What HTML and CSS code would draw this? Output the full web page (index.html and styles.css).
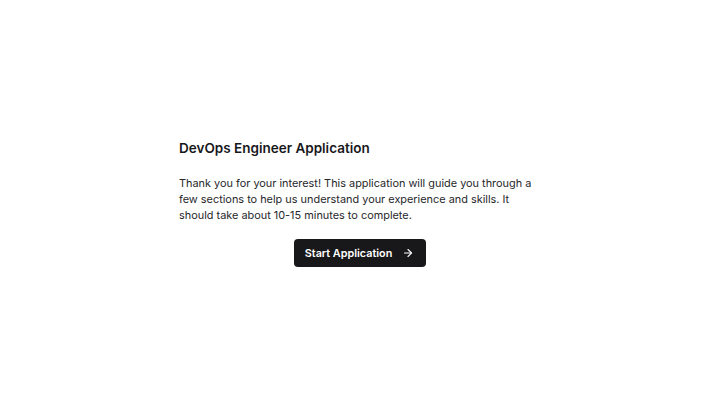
FILE: index.html
```html
<!DOCTYPE html>
<html lang="en">
<head>
<meta charset="utf-8">
<link rel="stylesheet" href="styles.css">
</head>
<body>
<main class="page">
  <section class="intro">
    <h1 class="title">DevOps Engineer Application</h1>
    <p class="lead">Thank you for your interest! This application will guide you through a few sections to help us understand your experience and skills. It should take about 10-15 minutes to complete.</p>
    <div class="actions">
      <button class="start" type="button">
        <span>Start Application</span>
        <svg class="arrow" width="12" height="12" viewBox="0 0 24 24" fill="none" stroke="currentColor" stroke-width="2.2" stroke-linecap="round" stroke-linejoin="round"><path d="M5 12h14"/><path d="M12 5l7 7-7 7"/></svg>
      </button>
    </div>
  </section>
</main>
</body>
</html>
```
FILE: styles.css
```css
* { box-sizing: border-box; }
html, body { margin: 0; padding: 0; background: #fff; }
body { font-family: Inter, "Noto Sans", sans-serif; color: #18181b; }
.page {
  height: 405px;
  display: flex;
  align-items: center;
  justify-content: center;
}
.intro {
  width: 362px;
  display: flex;
  flex-direction: column;
}
.title {
  margin: 0;
  font-size: 13.5px;
  line-height: 20px;
  font-weight: 600;
}
.lead {
  margin: 17px 0 0;
  font-size: 10.9px;
  line-height: 16px;
  color: #27272a;
}
.actions {
  margin-top: 16px;
  display: flex;
  justify-content: center;
}
.start {
  height: 28px;
  padding: 0 12px 0 11px;
  display: flex;
  align-items: center;
  gap: 10px;
  background: #18181b;
  color: #fff;
  border: none;
  border-radius: 4px;
  font-family: inherit;
  font-size: 10.8px;
  font-weight: 600;
}
.arrow { display: block; }
```
